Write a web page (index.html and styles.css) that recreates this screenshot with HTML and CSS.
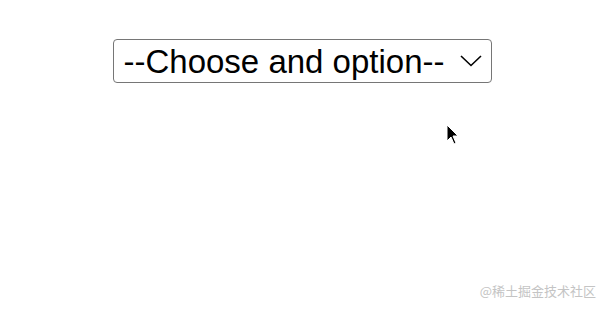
FILE: index.html
```html
<!DOCTYPE html>
<html lang="en">
<head>
    <meta charset="UTF-8">
    <meta name="viewport" content="width=device-width, initial-scale=1.0">
    <title>Select</title>
    <link rel="stylesheet" href="styles.css">
</head>
<body>
    <div class="wrap">
        <div class="select-box">
            <select class="picker">
                <option>--Choose and option--</option>
                <option>Dog</option>
                <option>Cat</option>
            </select>
            <svg class="chevron" width="22" height="12" viewBox="0 0 22 12">
                <path d="M1 1 L11 10.5 L21 1" fill="none" stroke="#000" stroke-width="1.6"/>
            </svg>
        </div>
    </div>

    <svg class="cursor" width="14" height="22" viewBox="0 0 14 22">
        <path d="M1 1 L1 17 L5 13 L8 20 L10 19 L7 12 L12 12 Z" fill="#000" stroke="#fff" stroke-width="1"/>
    </svg>

    <div class="mark">@稀土掘金技术社区</div>
</body>
</html>
```

FILE: styles.css
```css
body {
    margin: 0;
    height: 309px;
    position: relative;
    background: #fff;
    font-family: "Liberation Sans", Arial, sans-serif;
    overflow: hidden;
}

.wrap {
    padding-top: 39px;
    display: flex;
    justify-content: center;
}

.select-box {
    position: relative;
    margin-left: -2px;
}

.picker {
    appearance: none;
    -webkit-appearance: none;
    display: block;
    font-family: "Liberation Sans", Arial, sans-serif;
    font-size: 33px;
    width: 379px;
    height: 44px;
    color: #000;
    background: #fff;
    border: 1px solid #767676;
    border-radius: 4px;
    padding: 0 0 0 10px;
}

.chevron {
    position: absolute;
    right: 10px;
    top: 16px;
    pointer-events: none;
}

.cursor {
    position: absolute;
    left: 446px;
    top: 124px;
}

.mark {
    position: absolute;
    right: 10px;
    bottom: 9px;
    font-family: "Noto Sans CJK SC", sans-serif;
    font-size: 13px;
    color: #c4c4c4;
}
```
